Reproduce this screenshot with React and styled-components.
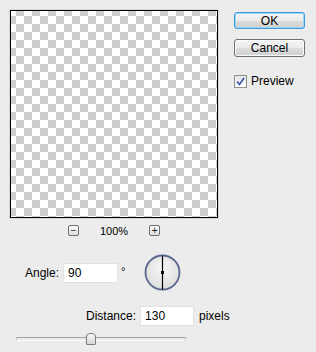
import React, { useState } from "react";
import styled, { createGlobalStyle } from "styled-components";

const Global = createGlobalStyle`
  html, body {
    margin: 0;
    padding: 0;
    background: #ececec;
  }
`;

const Dialog = styled.div`
  width: 316px;
  height: 352px;
  background: #ececec;
  font-family: "Liberation Sans", Arial, sans-serif;
  font-size: 12px;
  color: #000;
  overflow: hidden;
`;

const Top = styled.div`
  display: flex;
  padding: 9px 0 0 9px;
`;

const LeftCol = styled.div`
  width: 210px;
  display: flex;
  flex-direction: column;
`;

const Frame = styled.div`
  border: 1px solid #d6d6d6;
`;

const Canvas = styled.div`
  width: 206px;
  height: 206px;
  border: 1px solid #000;
  background-color: #fff;
  background-image: conic-gradient(#cdcdcd 25%, #fff 0 50%, #cdcdcd 0 75%, #fff 0);
  background-size: 16px 16px;
  background-position: -11px -11px;
`;

const ZoomBar = styled.div`
  display: flex;
  align-items: center;
  justify-content: center;
  gap: 21px;
  margin-top: 6px;
  height: 11px;
  font-size: 11px;
`;

const ZoomBtn = styled.div`
  width: 9px;
  height: 9px;
  border: 1px solid #6e6e6e;
  border-radius: 2px;
  background: linear-gradient(#fafafa, #dedede);
  display: flex;
  align-items: center;
  justify-content: center;
  font-size: 10px;
  line-height: 1;
  color: #222;
`;

const RightCol = styled.div`
  margin-left: 15px;
  padding-top: 3px;
  display: flex;
  flex-direction: column;
`;

const Button = styled.button`
  width: 71px;
  height: ${(p) => (p.primary ? "17px" : "18px")};
  margin-bottom: ${(p) => (p.primary ? "10px" : "0")};
  padding: 0;
  font-family: inherit;
  font-size: 12px;
  color: #000;
  border-radius: 3px;
  border: 1px solid ${(p) => (p.primary ? "#3a9be0" : "#707070")};
  box-shadow: ${(p) => (p.primary ? "inset 0 0 0 1px #9ed4f5" : "inset 0 0 0 1px #fcfcfc")};
  background: linear-gradient(#f4f4f4 0%, #ebebeb 50%, #dddddd 51%, #d0d0d0 100%);
`;

const CheckRow = styled.label`
  display: flex;
  align-items: center;
  gap: 4px;
  margin-top: 17px;
`;

const CheckBox = styled.span`
  width: 11px;
  height: 11px;
  border: 1px solid #8f8f8f;
  background: linear-gradient(#e6e6e6, #fff);
  display: flex;
  align-items: center;
  justify-content: center;
`;

const Row = styled.div`
  display: flex;
  align-items: center;
  margin-top: ${(p) => p.top}px;
  padding-left: ${(p) => p.left}px;
`;

const Input = styled.div`
  width: ${(p) => p.w}px;
  height: 20px;
  box-sizing: border-box;
  background: #fff;
  border: 1px solid #e2e2e2;
  padding-left: 4px;
  display: flex;
  align-items: center;
  margin-left: 4px;
`;

const Degree = styled.span`
  align-self: flex-start;
  margin: 11px 0 0 3px;
  font-size: 11px;
`;

const Dial = styled.svg`
  margin-left: 19px;
`;

const Unit = styled.span`
  margin-left: 5px;
`;

const Slider = styled.div`
  position: relative;
  margin: 7px 0 0 16px;
  width: 170px;
  height: 11px;
`;

const Track = styled.div`
  position: absolute;
  left: 0;
  right: 0;
  top: 4px;
  height: 2px;
  border-top: 1px solid #a4a4a4;
  border-bottom: 1px solid #fafafa;
  border-left: 1px solid #c8c8c8;
  border-right: 1px solid #c8c8c8;
`;

const Thumb = styled.div`
  position: absolute;
  top: 0;
  width: 8px;
  height: 10px;
  border: 1px solid #7a7a7a;
  border-radius: 4px 4px 1px 1px;
  background: linear-gradient(#fafafa, #d6d6d6);
`;

export default function App() {
  const [preview, setPreview] = useState(true);
  const pos = 70;
  return (
    <Dialog>
      <Global />
      <Top>
        <LeftCol>
          <Frame>
            <Canvas />
          </Frame>
          <ZoomBar>
            <ZoomBtn>−</ZoomBtn>
            <span>100%</span>
            <ZoomBtn>+</ZoomBtn>
          </ZoomBar>
        </LeftCol>
        <RightCol>
          <Button primary>OK</Button>
          <Button>Cancel</Button>
          <CheckRow onClick={() => setPreview(!preview)}>
            <CheckBox>
              {preview && (
                <svg width="9" height="9" viewBox="0 0 9 9">
                  <path d="M1 4.5 L3.5 7.5 L8 1" fill="none" stroke="#3a4fa8" strokeWidth="1.6" />
                </svg>
              )}
            </CheckBox>
            <span>Preview</span>
          </CheckRow>
        </RightCol>
      </Top>
      <Row top={18} left={25}>
        <span>Angle:</span>
        <Input w={55}>90</Input>
        <Degree>°</Degree>
        <Dial width="37" height="37" viewBox="0 0 37 37">
          <defs>
            <radialGradient id="dialbg" cx="50%" cy="40%" r="60%">
              <stop offset="0%" stopColor="#f8f8f8" />
              <stop offset="100%" stopColor="#dcdcdc" />
            </radialGradient>
          </defs>
          <circle cx="18.5" cy="18.5" r="17" fill="url(#dialbg)" stroke="#5b6891" strokeWidth="1.8" />
          <line x1="18.5" y1="1.5" x2="18.5" y2="35.5" stroke="#000" strokeWidth="1.2" />
          <rect x="17" y="17" width="3" height="3" fill="#000" />
        </Dial>
      </Row>
      <Row top={15} left={86}>
        <span>Distance:</span>
        <Input w={54}>130</Input>
        <Unit>pixels</Unit>
      </Row>
      <Slider>
        <Track />
        <Thumb style={{ left: pos }} />
      </Slider>
    </Dialog>
  );
}
